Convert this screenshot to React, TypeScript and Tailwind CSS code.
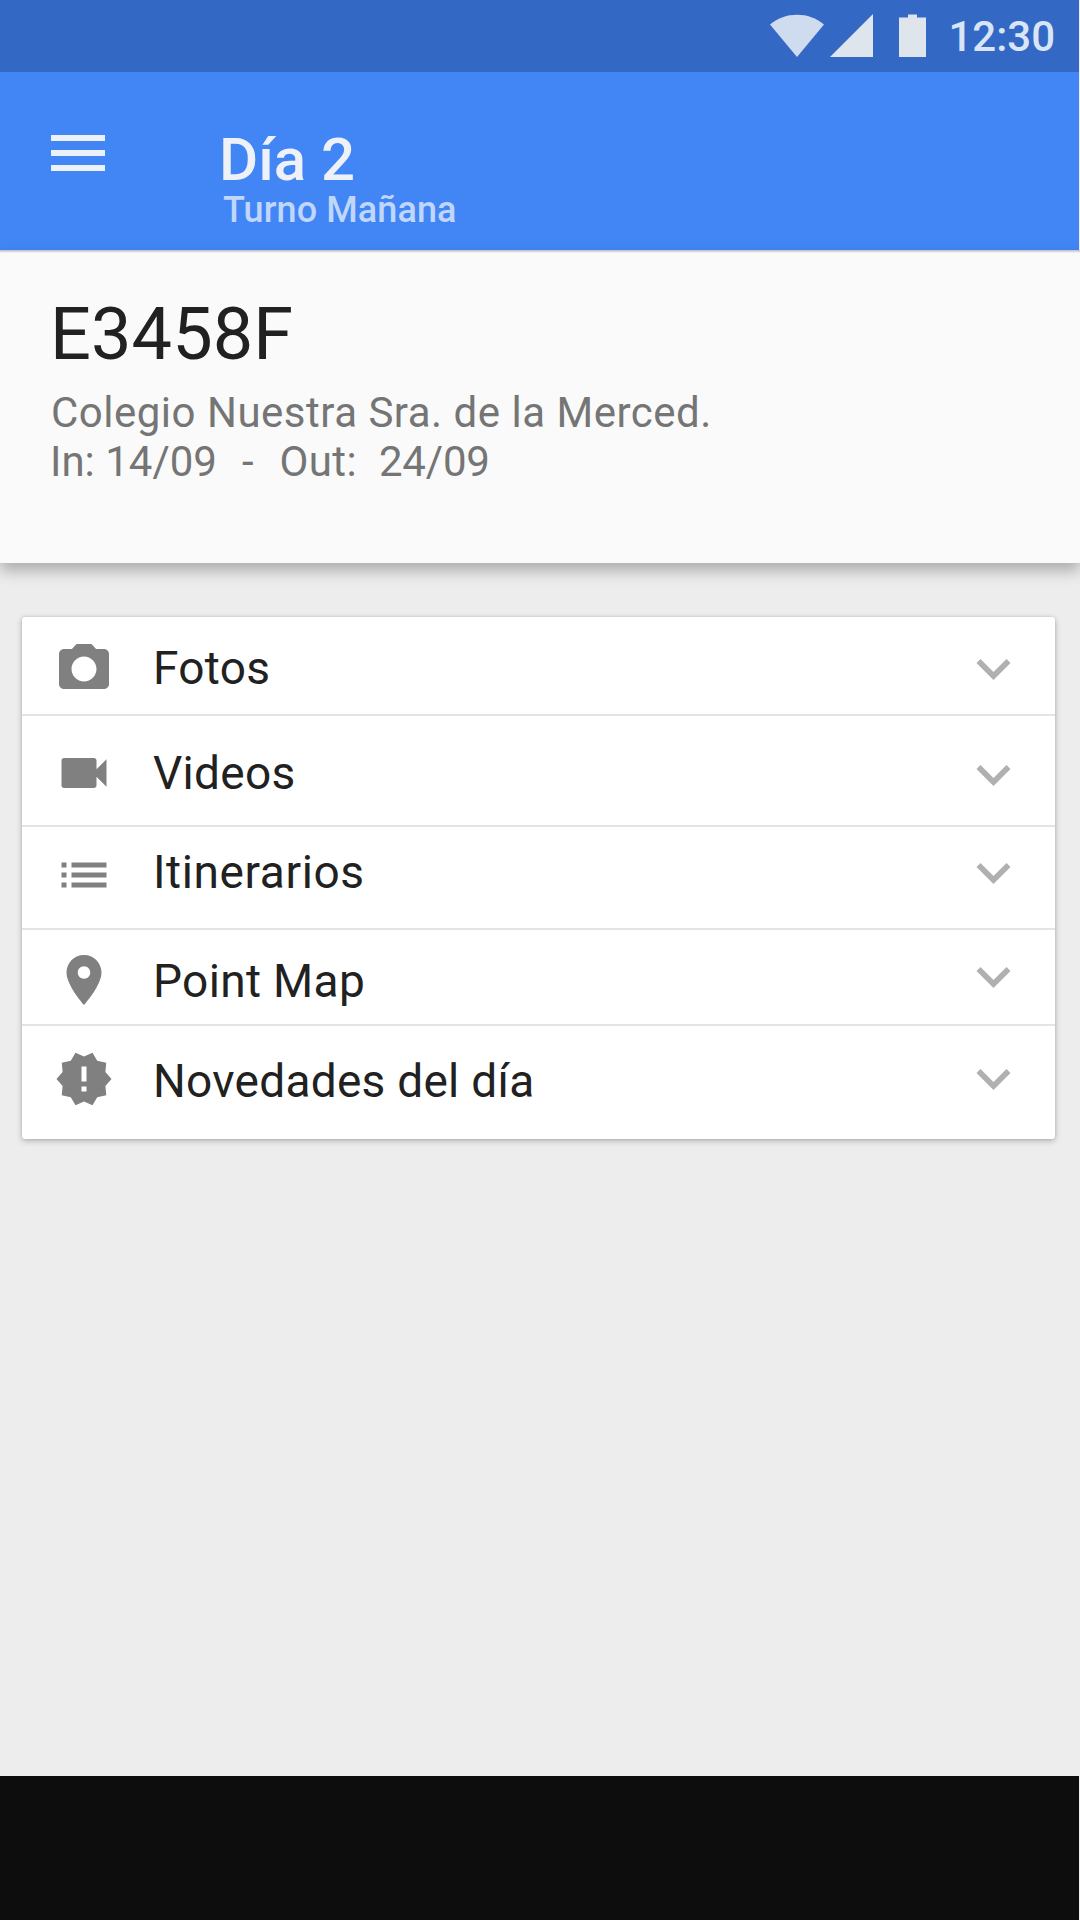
interface Section {
  label: string;
  path: string;
  rowClass: string;
  iconClass: string;
  labelClass: string;
  chevronClass: string;
}

const sections: Section[] = [
  {
    label: 'Fotos',
    path: 'M9 2L7.17 4H4c-1.1 0-2 .9-2 2v12c0 1.1.9 2 2 2h16c1.1 0 2-.9 2-2V6c0-1.1-.9-2-2-2h-3.17L15 2H9zm3 15c-2.76 0-5-2.24-5-5s2.24-5 5-5 5 2.24 5 5-2.24 5-5 5z',
    rowClass: 'h-[99px] border-b-2',
    iconClass: 'mt-[22px]',
    labelClass: 'mt-[21px] tracking-[0.3px]',
    chevronClass: 'mt-[42px]',
  },
  {
    label: 'Videos',
    path: 'M17 10.5V7c0-.55-.45-1-1-1H4c-.55 0-1 .45-1 1v10c0 .55.45 1 1 1h12c.55 0 1-.45 1-1v-3.5l4 4v-11l-4 4z',
    rowClass: 'h-[111px] border-b-2',
    iconClass: 'mt-[27px]',
    labelClass: 'mt-[27px] tracking-[0.3px]',
    chevronClass: 'mt-[49px]',
  },
  {
    label: 'Itinerarios',
    path: 'M3 13h2v-2H3v2zm0 4h2v-2H3v2zm0-8h2V7H3v2zm4 4h14v-2H7v2zm0 4h14v-2H7v2zM7 7v2h14V7H7z',
    rowClass: 'h-[103px] border-b-2',
    iconClass: 'mt-[18px]',
    labelClass: 'mt-[15px] tracking-[0.6px]',
    chevronClass: 'mt-[36px]',
  },
  {
    label: 'Point Map',
    path: 'M12 2C8.13 2 5 5.13 5 9c0 5.25 7 13 7 13s7-7.75 7-13c0-3.87-3.13-7-7-7zm0 9.5c-1.38 0-2.5-1.12-2.5-2.5s1.12-2.5 2.5-2.5 2.5 1.12 2.5 2.5-1.12 2.5-2.5 2.5z',
    rowClass: 'h-[96px] border-b-2',
    iconClass: 'mt-[20px]',
    labelClass: 'mt-[21px] tracking-[0.35px]',
    chevronClass: 'mt-[37px]',
  },
  {
    label: 'Novedades del día',
    path: 'M23 12l-2.44-2.78.34-3.68-3.61-.82-1.89-3.18L12 3 8.6 1.54 6.71 4.72l-3.61.81.34 3.68L1 12l2.44 2.78-.34 3.69 3.61.82 1.89 3.18L12 21l3.4 1.46 1.89-3.18 3.61-.82-.34-3.68L23 12zm-10 5h-2v-2h2v2zm0-4h-2V7h2v6z',
    rowClass: 'h-[113px]',
    iconClass: 'mt-[23px]',
    labelClass: 'mt-[25px] tracking-[0.27px]',
    chevronClass: 'mt-[43px]',
  },
];

function StatusBar() {
  return (
    <div className="flex h-[72px] items-start justify-end bg-[#3369c5] pr-[24px]">
      <svg className="mt-[14px] h-[43px] w-[54px] fill-[#cfdcf0]" viewBox="0 0 54 43">
        <path d="M0 10.5C8 4 17 .8 27 .8S46 4 54 10.5L27 43z" />
      </svg>
      <svg className="mt-[14px] ml-[6px] h-[43px] w-[43px] fill-[#dfe5ed]" viewBox="0 0 43 43">
        <path d="M43 0v43H0z" />
      </svg>
      <svg className="mt-[14px] ml-[26px] h-[43px] w-[27px] fill-[#dfe5ed]" viewBox="0 0 27 43">
        <path d="M9 .5h9v3h9V43H0V3.500h9z" />
      </svg>
      <span className="mt-[7px] ml-[22px] text-[42px] leading-[60px] font-medium text-[#d9e4f5]">12:30</span>
    </div>
  );
}

function AppBar() {
  return (
    <header className="flex h-[178px] items-start bg-[#4285f4] pl-[51px]">
      <div className="mt-[63px] flex w-[54px] flex-col gap-[9px]">
        <span className="h-[6px] bg-[#ecf1f8]" />
        <span className="h-[6px] bg-[#ecf1f8]" />
        <span className="h-[6px] bg-[#ecf1f8]" />
      </div>
      <div className="mt-[58px] ml-[114px] flex flex-col">
        <h1 className="text-[60px] leading-[60px] font-medium text-[#eef2f8]">Día 2</h1>
        <p className="pl-[4px] text-[36px] leading-[40px] font-medium tracking-[0.1px] text-[#c0d6fb]">Turno Mañana</p>
      </div>
    </header>
  );
}

function SectionRow({ section }: { section: Section }) {
  return (
    <li className={`flex items-start border-[#e4e4e4] pr-[44px] pl-[32px] ${section.rowClass}`}>
      <svg className={`size-[60px] shrink-0 fill-[#808080] ${section.iconClass}`} viewBox="0 0 24 24">
        <path d={section.path} />
      </svg>
      <span className={`ml-[39px] flex-1 text-[46px] leading-[60px] text-[#212121] ${section.labelClass}`}>
        {section.label}
      </span>
      <svg
        className={`h-[21px] w-[35px] shrink-0 fill-[#b0b0b0] ${section.chevronClass}`}
        viewBox="6 8.590 12 7.410"
      >
        <path d="M16.590 8.590L12 13.170 7.410 8.590 6 10l6 6 6-6z" />
      </svg>
    </li>
  );
}

export default function App() {
  return (
    <div className="flex h-[1920px] w-[1080px] flex-col bg-[#ededed] font-[Roboto,sans-serif]">
      <div className="w-[1079px]">
        <StatusBar />
        <AppBar />
      </div>
      <section className="h-[313px] bg-[#fafafa] pl-[50px] shadow-[0_8px_14px_rgba(0,0,0,0.27)]">
        <div className="-ml-[50px] h-[3px] bg-linear-to-b from-[#b4bac6] to-[#fafafa]" />
        <h2 className="mt-[42px] text-[72px] leading-[80px] tracking-[0.1px] text-[#212121]">E3458F</h2>
        <div className="mt-[13px] text-[42px] leading-[49px] text-[#757575]">
          <p className="pl-px tracking-[0.500px]">Colegio Nuestra Sra. de la Merced.</p>
          <p className="flex tracking-[-0.2px]">
            <span className="tracking-normal">In: 14/09</span>
            <span className="ml-[25px]">-</span>
            <span className="ml-[26px] tracking-[0.4px]">Out:</span>
            <span className="ml-[22px]">24/09</span>
          </p>
        </div>
      </section>
      <ul className="mt-[54px] mr-[25px] ml-[22px] rounded-[3px] bg-white shadow-[0_2px_6px_rgba(0,0,0,0.24),0_0_3px_rgba(0,0,0,0.12)]">
        {sections.map((section) => (
          <SectionRow key={section.label} section={section} />
        ))}
      </ul>
      <div className="mt-auto h-[144px] w-[1079px] bg-[#0d0d0d]" />
    </div>
  );
}
